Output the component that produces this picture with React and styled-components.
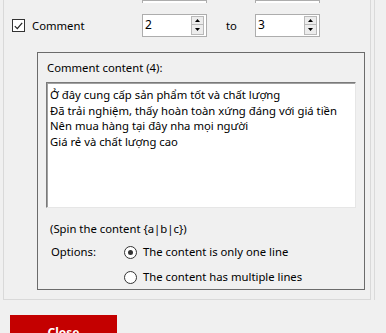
import React from "react";
import styled, { createGlobalStyle } from "styled-components";

const Global = createGlobalStyle`
  html, body { margin: 0; padding: 0; background: #f0f0f0; }
  body { font-family: "Noto Sans", "Open Sans", sans-serif; font-size: 11.3px; color: #000; }
`;

const Page = styled.div`
  width: 386px;
  height: 333px;
  overflow: hidden;
  background: #f0f0f0;
`;

const Frame = styled.div`
  width: 374px;
  border-right: 1px solid #dadada;
`;

const Panel = styled.div`
  margin-left: 3px;
  width: 366px;
  border: 1px solid #d9d9d9;
  border-top: none;
  padding-bottom: 9px;
`;

const FieldGrid = styled.div`
  display: grid;
  grid-template-columns: 130px 65px 48px 65px;
  padding-left: 8px;
  align-items: center;
`;

const StubRow = styled(FieldGrid)`
  height: 3px;
  overflow: hidden;
  align-items: end;
`;

const Stub = styled.div`
  grid-column: ${(p) => p.$col};
  height: 23px;
  box-sizing: border-box;
  border: 1px solid #adadad;
  background: #fff;
`;

const CommentRow = styled(FieldGrid)`
  margin-top: 11px;
  height: 23px;
`;

const CheckLabel = styled.label`
  display: flex;
  align-items: center;
  gap: 7px;
  height: 23px;
`;

const CheckBox = styled.span`
  width: 13px;
  height: 13px;
  box-sizing: border-box;
  border: 1px solid #333;
  background: #fff;
  display: flex;
  align-items: center;
  justify-content: center;
`;

const SpinBox = styled.div`
  height: 23px;
  box-sizing: border-box;
  border: 1px solid #adadad;
  background: #fff;
  display: flex;
  align-items: flex-start;
  padding: 1px 2px 0 2px;
  line-height: 17px;
  font-size: 12px;
`;

const SpinValue = styled.span`
  flex: 1;
`;

const SpinButtons = styled.div`
  display: flex;
  flex-direction: column;
  width: 13px;
`;

const SpinBtn = styled.span`
  height: 9px;
  box-sizing: border-box;
  border: 1px solid #b9b9b9;
  background: #ececec;
  display: flex;
  align-items: center;
  justify-content: center;
  & + & { border-top: none; height: 10px; }
`;

const ToText = styled.span`
  padding-left: 19px;
`;

const Group = styled.div`
  margin: 15px 0 0 33px;
  width: 328px;
  height: 238px;
  box-sizing: border-box;
  border: 1px solid #6b6b6b;
  padding: 7px 8px 0 8px;
  display: flex;
  flex-direction: column;
`;

const GroupTitle = styled.div`
  padding-left: 1px;
  line-height: 16px;
`;

const TextBox = styled.div`
  margin-top: 6px;
  width: 310px;
  height: 126px;
  box-sizing: border-box;
  background: #fff;
  border: 1px solid;
  border-color: #7a7a7a #e6e6e6 #e6e6e6 #7a7a7a;
  box-shadow: inset 1px 1px 0 #a0a0a0;
  padding: 4px 2px 0 3px;
  line-height: 15.6px;
  white-space: pre;
  overflow: hidden;
`;

const Hint = styled.div`
  margin-top: 13px;
  padding-left: 4px;
  line-height: 16px;
`;

const OptionsGrid = styled.div`
  margin-top: 7px;
  display: grid;
  grid-template-columns: 73px 1fr;
  row-gap: 9px;
  padding-left: 5px;
  align-items: center;
`;

const OptionsLabel = styled.span`
  line-height: 16px;
`;

const RadioLabel = styled.label`
  grid-column: 2;
  display: flex;
  align-items: center;
  gap: 6px;
  line-height: 16px;
`;

const Radio = styled.span`
  width: 13px;
  height: 13px;
  box-sizing: border-box;
  border-radius: 50%;
  border: 1px solid #333;
  background: #fff;
  display: flex;
  align-items: center;
  justify-content: center;
  &::after {
    content: "";
    width: 5px;
    height: 5px;
    border-radius: 50%;
    background: ${(p) => (p.$checked ? "#333" : "transparent")};
  }
`;

const CloseButton = styled.button`
  margin: 15px 0 0 10px;
  width: 107px;
  height: 34px;
  border: none;
  background: #c40000;
  color: #fff;
  font-family: "Noto Sans", "Open Sans", sans-serif;
  font-weight: bold;
  font-size: 12px;
  padding: 0;
  display: block;
`;

const Up = () => (
  <svg width="5" height="3" viewBox="0 0 5 3"><path d="M2.5 0L5 3H0z" fill="#000" /></svg>
);
const Down = () => (
  <svg width="5" height="3" viewBox="0 0 5 3"><path d="M0 0h5L2.5 3z" fill="#000" /></svg>
);

function Spin({ value }) {
  return (
    <SpinBox>
      <SpinValue>{value}</SpinValue>
      <SpinButtons>
        <SpinBtn><Up /></SpinBtn>
        <SpinBtn><Down /></SpinBtn>
      </SpinButtons>
    </SpinBox>
  );
}

const lines = [
  "Ở đây cung cấp sản phẩm tốt và chất lượng",
  "Đã trải nghiệm, thấy hoàn toàn xứng đáng với giá tiền",
  "Nên mua hàng tại đây nha mọi người",
  "Giá rẻ và chất lượng cao",
];

export default function App() {
  return (
    <Page>
      <Global />
      <Frame>
        <Panel>
          <StubRow>
            <Stub $col={2} />
            <Stub $col={4} />
          </StubRow>
          <CommentRow>
            <CheckLabel>
              <CheckBox>
                <svg width="9" height="8" viewBox="0 0 9 8">
                  <path d="M0.8 4.2L3.3 6.7L8.2 0.9" fill="none" stroke="#222" strokeWidth="1.2" />
                </svg>
              </CheckBox>
              Comment
            </CheckLabel>
            <Spin value="2" />
            <ToText>to</ToText>
            <Spin value="3" />
          </CommentRow>
          <Group>
            <GroupTitle>Comment content (4):</GroupTitle>
            <TextBox>{lines.join("\n")}</TextBox>
            <Hint>(Spin the content {"{a|b|c}"})</Hint>
            <OptionsGrid>
              <OptionsLabel>Options:</OptionsLabel>
              <RadioLabel>
                <Radio $checked />
                The content is only one line
              </RadioLabel>
              <RadioLabel>
                <Radio />
                The content has multiple lines
              </RadioLabel>
            </OptionsGrid>
          </Group>
        </Panel>
      </Frame>
      <CloseButton>Close</CloseButton>
    </Page>
  );
}
